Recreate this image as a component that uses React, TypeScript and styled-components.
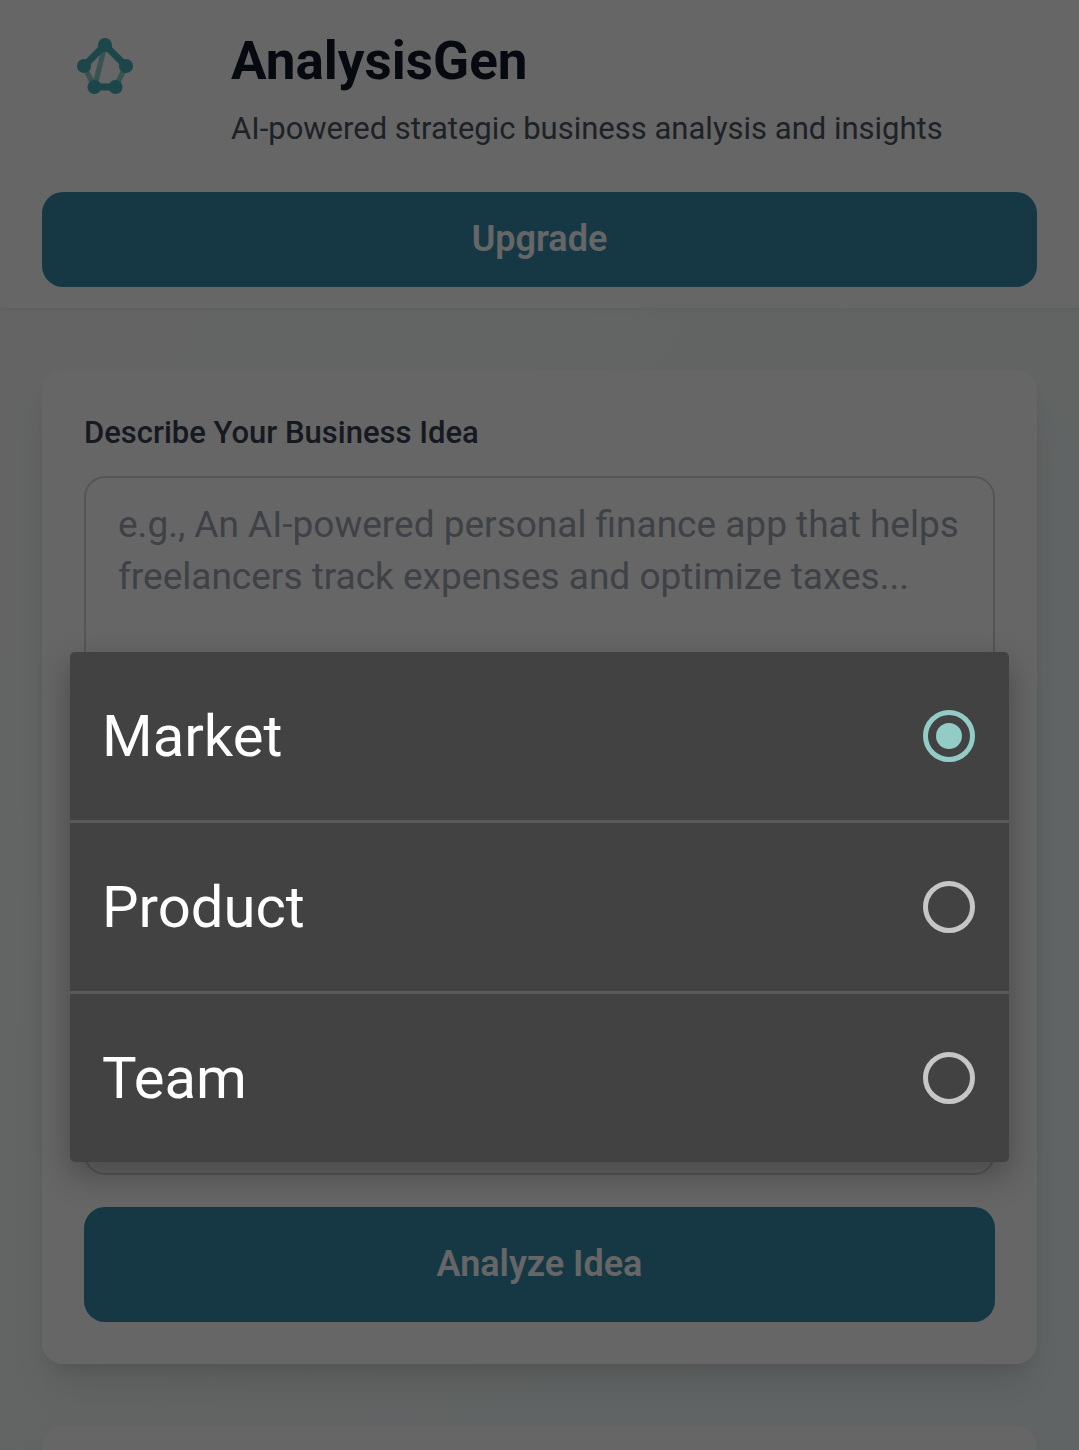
import React, { useState } from "react";
import styled, { createGlobalStyle } from "styled-components";

const GlobalStyle = createGlobalStyle`
  *, *::before, *::after { box-sizing: border-box; }
  body {
    margin: 0;
    font-family: Roboto, "Noto Sans", sans-serif;
    background: #f9fafb;
  }
`;

const Page = styled.div`
  height: 100vh;
  overflow: hidden;
  background: linear-gradient(120deg, #fafafa, #f6fafa 50%, #f0fafa);
`;

const Header = styled.header`
  display: flex;
  flex-direction: column;
  gap: 42px;
  padding: 24px 42px 21px;
  background: #ffffff;
  box-shadow: 0 2px 5px rgba(0, 0, 0, 0.05);
`;

const Brand = styled.div`
  display: flex;
  align-items: flex-start;
  gap: 84px;
  padding-left: 21px;
`;

const Logo = styled.svg`
  flex: none;
  width: 84px;
  height: 84px;
  color: #46afb6;
`;

const BrandText = styled.div`
  display: flex;
  flex-direction: column;
  gap: 10px;
`;

const Title = styled.h1`
  margin: 0;
  color: #111827;
  font-size: 53px;
  font-weight: 700;
  line-height: 74px;
`;

const Tagline = styled.p`
  margin: 0;
  color: #4b5563;
  font-size: 31px;
  line-height: 42px;
`;

const Button = styled.button<{ $tall?: boolean }>`
  width: 100%;
  padding: ${(p) => (p.$tall ? 31 : 21)}px 42px;
  border: 0;
  border-radius: 21px;
  background: #378cac;
  color: #ffffff;
  font-family: inherit;
  font-size: 36px;
  font-weight: 600;
  line-height: 53px;
  cursor: pointer;
`;

const Main = styled.main`
  display: flex;
  flex-direction: column;
  gap: 62px;
  padding: 62px 42px;
`;

const Card = styled.section`
  min-height: 300px;
  padding: 42px;
  border-radius: 21px;
  background: #ffffff;
  box-shadow: 0 26px 39px -8px rgba(0, 0, 0, 0.1),
    0 10px 16px -5px rgba(0, 0, 0, 0.08);
`;

const Form = styled.form`
  display: flex;
  flex-direction: column;
  gap: 32px;
`;

const Field = styled.div`
  position: relative;
  display: flex;
  flex-direction: column;
  gap: 22px;
`;

const Label = styled.label`
  color: #374151;
  font-size: 31px;
  font-weight: 500;
  line-height: 42px;
`;

const IdeaInput = styled.textarea`
  display: block;
  width: 100%;
  padding: 21px 32px;
  border: 2px solid #d1d5db;
  border-radius: 21px;
  background: #ffffff;
  color: #111827;
  font-family: inherit;
  font-size: 37px;
  line-height: 52px;
  resize: none;

  &::placeholder {
    color: #9ca3af;
    opacity: 1;
  }
`;

const FocusSelect = styled.select`
  width: 100%;
  height: 101px;
  padding: 0 32px;
  border: 2px solid #d1d5db;
  border-radius: 21px;
  background: #ffffff;
  color: #111827;
  font-family: inherit;
  font-size: 37px;
`;

const Scrim = styled.div`
  position: fixed;
  inset: 0;
  z-index: 10;
  background: rgba(0, 0, 0, 0.6);
`;

const Picker = styled.div`
  position: absolute;
  right: -14px;
  bottom: 13px;
  left: -14px;
  z-index: 20;
  overflow: hidden;
  border-radius: 5px;
  background: #424242;
  box-shadow: 0 12px 32px rgba(0, 0, 0, 0.3);
`;

const PickerRow = styled.label`
  display: flex;
  align-items: center;
  justify-content: space-between;
  height: 168px;
  padding: 0 34px 0 32px;
  color: #ffffff;
  font-size: 58px;
  line-height: 68px;
  cursor: pointer;

  & + & {
    height: 171px;
    border-top: 3px solid #5a5a5a;
  }
`;

const Radio = styled.input`
  display: grid;
  place-items: center;
  flex: none;
  width: 52px;
  height: 52px;
  margin: 0;
  border: 5px solid #c6c6c6;
  border-radius: 50%;
  appearance: none;

  &:checked {
    border-color: #93cbc6;
  }

  &:checked::before {
    content: "";
    width: 26px;
    height: 26px;
    border-radius: 50%;
    background: #93cbc6;
  }
`;

const FOCUS_AREAS = ["Market", "Product", "Team"];

function NetworkLogo() {
  return (
    <Logo viewBox="4 4 16 16" fill="none" stroke="currentColor" aria-hidden="true">
      <path d="M8 12l2 4M16 12l-2 4M12 8l-2 8" strokeWidth="1" opacity="0.6" />
      <path d="M8 12l4-4 4 4M10 16h4" strokeWidth="1.3" />
      <g fill="currentColor" stroke="none">
        <circle cx="12" cy="8" r="1.35" />
        <circle cx="8" cy="12" r="1.35" />
        <circle cx="16" cy="12" r="1.35" />
        <circle cx="10" cy="16" r="1.35" />
        <circle cx="14" cy="16" r="1.35" />
      </g>
    </Logo>
  );
}

export default function App() {
  const [focus, setFocus] = useState("Market");

  return (
    <Page>
      <GlobalStyle />
      <Header>
        <Brand>
          <NetworkLogo />
          <BrandText>
            <Title>AnalysisGen</Title>
            <Tagline>AI-powered strategic business analysis and insights</Tagline>
          </BrandText>
        </Brand>
        <Button type="button">Upgrade</Button>
      </Header>
      <Main>
        <Card>
          <Form onSubmit={(e) => e.preventDefault()}>
            <Field>
              <Label htmlFor="idea">Describe Your Business Idea</Label>
              <IdeaInput
                id="idea"
                rows={10}
                placeholder="e.g., An AI-powered personal finance app that helps freelancers track expenses and optimize taxes..."
              />
            </Field>
            <Field>
              <FocusSelect
                aria-label="Focus area"
                value={focus}
                onChange={(e) => setFocus(e.target.value)}
              >
                {FOCUS_AREAS.map((area) => (
                  <option key={area}>{area}</option>
                ))}
              </FocusSelect>
              <Picker role="radiogroup" aria-label="Focus area">
                {FOCUS_AREAS.map((area) => (
                  <PickerRow key={area}>
                    {area}
                    <Radio
                      type="radio"
                      name="focus"
                      value={area}
                      checked={focus === area}
                      onChange={() => setFocus(area)}
                    />
                  </PickerRow>
                ))}
              </Picker>
            </Field>
            <Button type="submit" $tall>
              Analyze Idea
            </Button>
          </Form>
        </Card>
        <Card />
      </Main>
      <Scrim />
    </Page>
  );
}
